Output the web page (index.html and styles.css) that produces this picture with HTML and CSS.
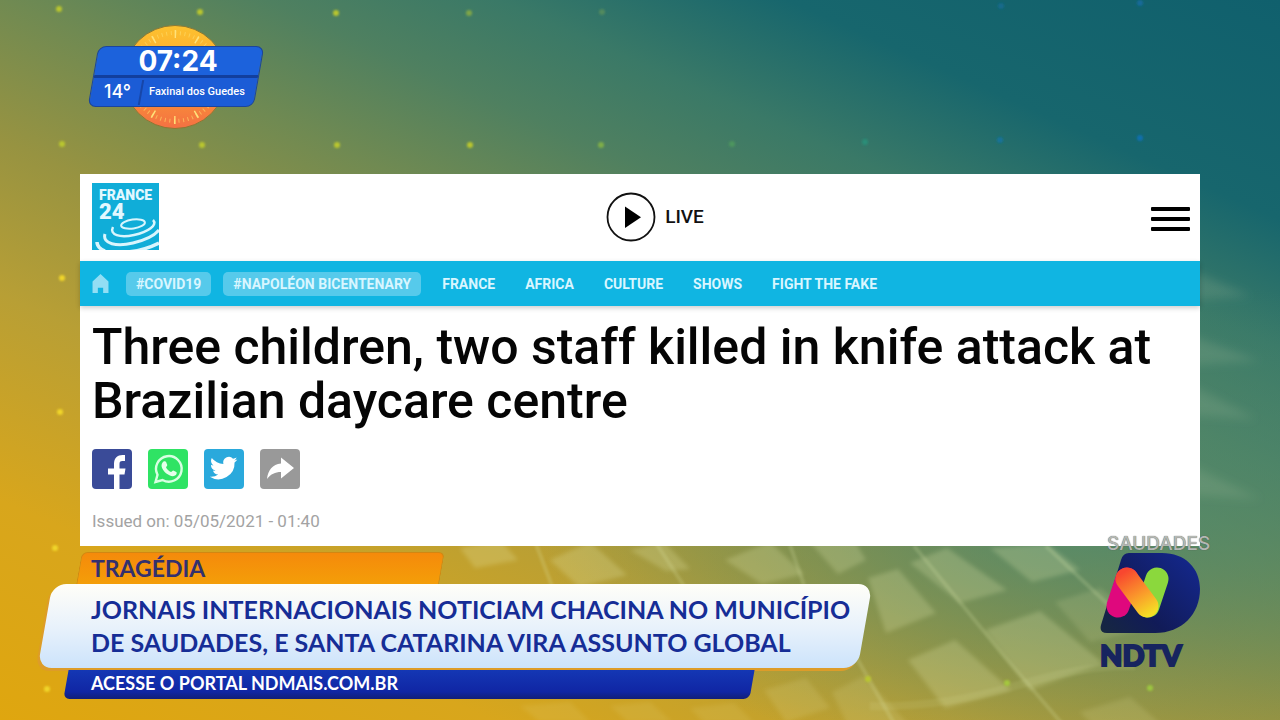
FILE: index.html
```
<!DOCTYPE html>
<html lang="pt-BR">
<head>
<meta charset="utf-8">
<title>NDTV – Jornais internacionais noticiam chacina</title>
<link rel="stylesheet" href="styles.css">
</head>
<body>
<div class="screen">
  <svg class="backdrop" viewBox="0 0 1280 720" preserveAspectRatio="none" aria-hidden="true">
    <defs>
      <filter id="soft" x="-2" y="-2" width="5" height="5"><feGaussianBlur stdDeviation="1"/></filter>
      <filter id="softer"><feGaussianBlur stdDeviation="2"/></filter>
      <filter id="softest" x="-1" width="3"><feGaussianBlur stdDeviation="5"/></filter>
    </defs>
    <g fill="#eef0b4" fill-opacity=".22" filter="url(#softer)">
      <path d="M460 548l40-8 18 20-43 8zM550 560l40-18 37 33-48 12zM630 550l34-8 26 27-24 2zM725 560l45-18 34 32-42 10zM808 540h46l12 20-28 14z"/>
      <path d="M868 578l30-9 38 44-50 20zM910 563l37-15 60 42-47 13zM990 548l58-4 32 26-48 12zM985 630l55-19 63 52-73 27zM908 660l47-20 56 50-66 18z"/>
      <path fill-opacity=".13" d="M1055 602l45-14 50 40-60 14zM832 692l32-16 46 50h-62zM764 690l42-12 24 30-44 14zM1080 712l50-15 34 30h-70z"/>
      <path fill-opacity=".1" d="M690 708l44-5 20 20h-50zM610 706l40-4 22 20h-44zM520 706l50-4 20 20h-50z"/>
    </g>
    <path d="M1190 270l60 26-60 4zM1190 335l70 26-70 4zM1190 385l66 34-66-4zM1190 465l70 34-70-4z" fill="#a3c09c" fill-opacity=".2" filter="url(#softest)"/>
    <g fill="none" stroke="#e6f0b0" stroke-opacity=".18" stroke-width="4" filter="url(#soft)">
      <path d="M536 544l16 42M654 540l30 46M790 545l14 40M914 546l90 110 60 70M1046 546l70 66M855 655l40 70"/>
      <path stroke-opacity=".1" stroke-width="8" d="M870 706q70 2 145-20t120-20"/>
    </g>
    <g fill="#b9c62f" filter="url(#soft)">
      <circle cx="59" cy="9" r="3"/><circle cx="200" cy="12" r="3"/><circle cx="336" cy="13" r="3"/><circle cx="469" cy="13" r="3" fill="#7fa64a"/><circle cx="602" cy="12" r="3" fill="#528a5e"/><circle cx="1001" cy="6" r="3" fill="#146a8c"/><circle cx="1140" cy="3" r="3" fill="#146a9a"/>
      <circle cx="62" cy="144" r="3"/><circle cx="202" cy="145" r="3"/><circle cx="337" cy="145" r="3"/><circle cx="470" cy="145" r="3"/><circle cx="601" cy="145" r="3" fill="#7fae4a"/><circle cx="732" cy="144" r="3" fill="#4d955e"/><circle cx="865" cy="142" r="3" fill="#2a8e78"/><circle cx="1000" cy="140" r="3" fill="#14729a"/><circle cx="1140" cy="138" r="3" fill="#116fae"/>
      <g fill="#f0d52a"><circle cx="62" cy="278" r="3"/><circle cx="60" cy="412" r="3"/><circle cx="55" cy="548" r="3"/><circle cx="47" cy="689" r="3"/></g>
      <circle cx="868" cy="679" r="3"/><circle cx="1007" cy="683" r="3" fill="#a5c83c"/><circle cx="1150" cy="688" r="3" fill="#9cc63f"/>
    </g>
  </svg>

  <header class="top">
    <div class="clock">
      <svg class="sun" viewBox="0 0 104 104" aria-hidden="true">
        <defs><linearGradient id="sunFill" x2="0" y2="1"><stop stop-color="#fdc22f"/><stop offset=".5" stop-color="#fba231"/><stop offset="1" stop-color="#f47043"/></linearGradient></defs>
        <circle cx="52" cy="52" r="51.500" fill="url(#sunFill)" stroke="#8b7834"/>
        <circle cx="52" cy="52" r="44" fill="none" stroke="#ffdc6b" stroke-width="4" stroke-dasharray="1 3.608" opacity=".6"/>
        <circle cx="52" cy="52" r="43" fill="none" stroke="#ffe27a" stroke-width="8" stroke-dasharray="1.500 21.015" stroke-dashoffset=".7"/>
      </svg>
      <div class="clock-plate">
        <time class="hour">07:24</time>
        <div class="weather"><span class="temp">14°</span><span class="city">Faxinal dos Guedes</span></div>
      </div>
    </div>
  </header>

  <article class="card">
    <div class="masthead">
      <a class="brand" href="#" aria-label="France 24">
        <span class="brand-name">FRANCE</span><span class="brand-num">24</span>
        <svg class="ripples" viewBox="0 0 67 67" fill="none" stroke="#d9f5fd" aria-hidden="true">
          <ellipse cx="41" cy="41" rx="12" ry="4.500" stroke-width="2" transform="rotate(-8 41 41)"/>
          <path stroke-width="2.500" d="M21 44C17 52 28 55 42 52C56 49 66 42 61 37"/>
          <path stroke-width="3" d="M13 51C10 61 25 64 41 60C54 57 63 52 67 47"/>
          <path stroke-width="3.500" d="M5 59C5 64 8 66 13 68M35 69C48 68 59 64 67 60"/>
        </svg>
      </a>
      <a class="live" href="#">
        <svg viewBox="0 0 50 50" aria-hidden="true"><circle cx="25" cy="25" r="23.500" fill="none" stroke="#111" stroke-width="1.800"/><path d="M19 14.500v21.500l16-10.700z"/></svg>
        <span>LIVE</span>
      </a>
      <button class="menu" type="button" aria-label="Menu"><i></i><i></i><i></i></button>
    </div>
    <nav class="nav">
      <a class="home" href="#" aria-label="Home"><svg viewBox="0 0 16 18"><path d="M8 0l7.500 7v11H10.500v-5h-5v5H.5V7z"/></svg></a>
      <a class="tag" href="#">#COVID19</a><a class="tag" href="#">#NAPOLÉON BICENTENARY</a>
      <a class="link" href="#">FRANCE</a><a class="link" href="#">AFRICA</a><a class="link" href="#">CULTURE</a><a class="link" href="#">SHOWS</a><a class="link" href="#">FIGHT THE FAKE</a>
    </nav>
    <div class="story">
      <h1>Three children, two staff killed in knife attack at Brazilian daycare centre</h1>
      <div class="share">
        <a class="fb" href="#" aria-label="Facebook"><svg viewBox="0 0 40 40"><path d="M22 40V25.500h-6v-6h6v-4.500c0-6 3.500-9 8.500-9H33v6h-2.500c-2.500 0-3 1.200-3 3.200v4.300h6l-1 6h-5V40z"/></svg></a>
        <a class="wa" href="#" aria-label="WhatsApp"><svg viewBox="0 0 40 40"><path fill="none" stroke="#d8ffe2" stroke-width="2.400" d="M7.500 33l2-7.200A12.800 12.800 0 1 1 14.500 31z"/><path fill="#e4ffea" d="M15.500 12.500c1-.6 2.200-.4 2.600.5l1.200 2.900c.2.700-1.300 2-1.300 2.400.8 2 2.900 4 5 4.800.6 0 1.700-1.700 2.300-1.500l3 1.500c.8.500.3 2.300-.4 3-4 3.500-13-2.500-14.300-8.600-.3-2 .5-4 1.900-5z"/></svg></a>
        <a class="tw" href="#" aria-label="Twitter"><svg viewBox="0 0 24 24"><path transform="translate(3.500 3.200) scale(.69)" d="M24 4.600a10 10 0 0 1-2.800.8 5 5 0 0 0 2.100-2.700 10 10 0 0 1-3.100 1.200 4.900 4.900 0 0 0-8.400 4.500A14 14 0 0 1 1.700 3.100a4.900 4.900 0 0 0 1.500 6.600A5 5 0 0 1 1 9.100a4.900 4.900 0 0 0 3.900 4.900 5 5 0 0 1-2.200.1 4.900 4.900 0 0 0 4.600 3.400A10 10 0 0 1 0 19.500a14 14 0 0 0 21.500-12.400A10 10 0 0 0 24 4.600z"/></svg></a>
        <a class="sh" href="#" aria-label="Share"><svg viewBox="0 0 40 40"><path d="M7 30C8 21 12.500 15.500 21 14.500V8.500L34 19 21 29.500v-6.500C15 23 11 25 7 30z"/></svg></a>
      </div>
      <p class="issued">Issued on: 05/05/2021 - 01:40</p>
    </div>
  </article>

  <footer class="bottom">
    <section class="lower">
      <p class="topic">TRAGÉDIA</p>
      <h2 class="headline">JORNAIS INTERNACIONAIS NOTICIAM CHACINA NO MUNICÍPIO<br>DE SAUDADES, E SANTA CATARINA VIRA ASSUNTO GLOBAL</h2>
      <p class="portal">ACESSE O PORTAL NDMAIS.COM.BR</p>
    </section>
    <aside class="station">
      <span class="place">SAUDADES</span>
      <svg class="logo" viewBox="0 0 100 82" aria-hidden="true">
        <defs>
          <linearGradient id="d" x1="0" y1="1" x2="1" y2=".2"><stop stop-color="#17283f"/><stop offset=".4" stop-color="#111b58"/><stop offset="1" stop-color="#14278a"/></linearGradient>
          <linearGradient id="n" gradientUnits="userSpaceOnUse" x1="24" y1="20" x2="50" y2="62"><stop stop-color="#f8472f"/><stop offset=".55" stop-color="#fa982b"/><stop offset="1" stop-color="#f5dd25"/></linearGradient>
        </defs>
        <path d="M29 1H62C85 1 100 16 100 37C100 62 82 81 55 81H7Q-1 81 1 73L21 8Q23 1 29 1z" fill="url(#d)"/>
        <g fill="none" stroke-width="23" stroke-linecap="round"><path stroke="#df087d" d="M27 27L18 54"/><path stroke="#8bd83d" d="M57 27L48 54"/><path stroke="url(#n)" d="M27 27L47 54"/></g>
      </svg>
      <strong class="ndtv">NDTV</strong>
    </aside>
  </footer>
</div>
</body>
</html>
```
FILE: styles.css
```
* { box-sizing: border-box; }
body, h1, h2, p { margin: 0; }
a { color: inherit; text-decoration: none; }
body { font-family: Roboto, "Liberation Sans", sans-serif; }
svg { display: block; }

.screen {
  position: relative;
  min-height: 100vh;
  display: flex;
  flex-direction: column;
  overflow: hidden;
  background:
    radial-gradient(ellipse 42% 34% at 84% 72%, rgba(70, 136, 116, .75), rgba(70, 136, 116, 0)),
    linear-gradient(24deg, #dfa60f, #d8a61c 17%, #b89f35 33%, #979341 45%, #708a52 56%, #4f8060 65%, #3a7967 73%, #17666d 83%, #10606d);
}
.backdrop { position: absolute; inset: 0; width: 100%; height: 100%; }
.top, .card, .bottom { position: relative; }

.top { padding: 25px 88px 45px; }
.clock { position: relative; width: 176px; padding: 21px 0 22px; }
.sun { position: absolute; left: 35px; top: 0; width: 104px; height: 104px; }
.clock-plate { position: relative; color: #fff; z-index: 0; }
.clock-plate::before {
  content: "";
  position: absolute;
  inset: 0 5px;
  z-index: -1;
  transform: skewX(-10deg);
  border: 1px solid #1b459c;
  border-radius: 8px;
  background: linear-gradient(#1c62dc 28px, #123f9e 28px, #123f9e 31px, #1b5cd6 31px);
}
.hour { display: block; padding-left: 4px; font: 700 28px/30px Inter, sans-serif; text-align: center; }
.weather { display: flex; height: 31px; align-items: center; }
.temp { position: relative; width: 54px; padding-left: 16px; font: 500 18px/28px Inter, sans-serif; }
.temp::after {
  content: "";
  position: absolute;
  inset: 2px 0 1px auto;
  width: 2px;
  transform: skewX(-10deg);
  background: #1746a8;
}
.city { padding-left: 7px; font-size: 11px; font-weight: 500; line-height: 28px; white-space: nowrap; }

.card { margin: 0 80px; background: #fff; }
.masthead {
  display: grid;
  grid-template-columns: 1fr auto 1fr;
  align-items: center;
  height: 87px;
  padding: 0 10px 2px 12px;
}
.brand { position: relative; width: 67px; height: 67px; padding: 5px 7px; background: #10add8; color: #e2f8ff; overflow: hidden; }
.brand span { display: block; font-weight: 900; }
.brand-name { font-size: 14px; line-height: 15px; }
.brand-num { font-size: 22px; line-height: 18px; }
.ripples { position: absolute; inset: 0; }
.live { display: flex; align-items: center; gap: 9px; padding-left: 28px; font-size: 19px; font-weight: 500; color: #111; }
.live svg { width: 50px; height: 50px; }
.menu { justify-self: end; display: grid; gap: 6px; width: 39px; padding: 4px 0 0; border: 0; background: none; }
.menu i { height: 4px; border-radius: 1px; background: #000; }

.nav {
  display: flex;
  align-items: center;
  height: 45px;
  padding-left: 12px;
  background: #10b5e2;
  box-shadow: 0 2px 5px rgba(0, 0, 0, .2);
  color: #d9f6ff;
  font-size: 14px;
  font-weight: 700;
}
.home { width: 17px; margin-right: 17px; fill: #92def4; }
.tag { margin-right: 12px; padding: 0 10px; border-radius: 5px; background: #56caeb; line-height: 24px; }
.link { margin: 0 21px 0 9px; }

.story { padding: 14px 12px; }
h1 { color: #050505; font-size: 50px; line-height: 54px; font-weight: 500; }
.share { display: flex; gap: 16px; margin-top: 21px; }
.share a { width: 40px; height: 40px; border-radius: 4px; fill: #fff; overflow: hidden; }
.fb { background: #3a4b98; }
.wa { background: #2fe364; }
.tw { background: #2aa9dc; }
.sh { background: #999; }
.issued { margin-top: 21px; color: #a3a3a3; font-size: 17px; line-height: 22px; }

.bottom { flex: 1; display: flex; justify-content: space-between; align-items: flex-start; padding: 0 68px 0 38px; }
.lower { padding-top: 6px; color: #162d96; font-family: Lato, sans-serif; font-weight: 700; }
.lower > * { position: relative; z-index: 0; white-space: nowrap; }
.lower > *::before { content: ""; position: absolute; z-index: -1; transform: skewX(-10deg); }
.topic { width: 375px; margin-left: 35px; padding-left: 18px; font-size: 23px; line-height: 32px; color: #33306e; }
.topic::before { inset: 0 6px; border: 1px solid #d18712; border-bottom: 0; border-radius: 6px 6px 0 0; background: linear-gradient(#f58a0b, #f49e08); }
.headline { width: 834px; padding: 9px 0 9px 53px; font-size: 25px; line-height: 33px; font-weight: 700; }
.headline::before { inset: 0 7px; border-radius: 14px; background: linear-gradient(#fffef8, #e9f2fb 50%, #cce3fb); box-shadow: -2px 3px 0 #dd9c29; }
.portal { width: 692px; margin: 2px 0 0 25px; padding: 0 0 3px 28px; color: #fff; font-size: 18px; line-height: 26px; }
.portal::before { inset: 0 3px; border-radius: 0 0 6px 6px; background: linear-gradient(#1437b4, #1026a4 75%, #121f77); }

.station { width: 112px; }
.place { display: block; margin: -11px 0 0 7px; color: #b4b8b4; font: 500 19px/17px Inter, sans-serif; text-shadow: 0 0 1px #444; }
.logo { width: 100px; height: 82px; }
.ndtv { display: block; color: #17245f; font: 900 29px/42px Lato, sans-serif; -webkit-text-stroke: 2px #17245f; }
```
